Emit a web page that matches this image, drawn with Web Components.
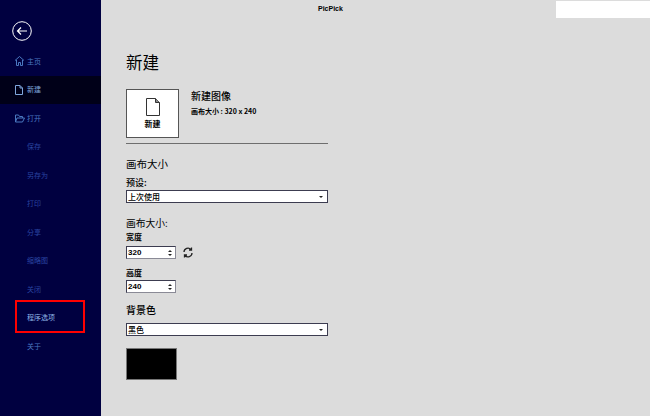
<!DOCTYPE html>
<html lang="zh">
<head>
<meta charset="utf-8">
<title>PicPick</title>
<style>
  html, body { margin: 0; height: 100%; }
  body { font-family: "Liberation Sans", "Noto Sans CJK SC", sans-serif; }
</style>
</head>
<body>
<app-shell>
  <nav-rail slot="nav">
    <nav-item>
      <svg slot="icon" width="9" height="10" viewBox="0 0 9 10" fill="none" stroke="#4a78c0"><path d="M0 4.500 4.500.5 9 4.500M1.500 4v5.500h2V6.500h2v3h2V4"/></svg>
      主页
    </nav-item>
    <nav-item active>
      <svg slot="icon" width="8" height="10" viewBox="0 0 8 10" fill="none" stroke="#7fa6dc"><path d="M.5.500h4.500l2.500 2.500v6.500h-7zM5 .5V3h2.500"/></svg>
      新建
    </nav-item>
    <nav-item>
      <svg slot="icon" width="10" height="9" viewBox="0 0 10 9" fill="none" stroke="#4a78c0"><path d="M.5 8V1h3l1 1.500h3V4M.5 8l1.500-4h7.500l-2 4z"/></svg>
      打开
    </nav-item>
    <nav-item dim>保存</nav-item>
    <nav-item dim>另存为</nav-item>
    <nav-item dim>打印</nav-item>
    <nav-item dim>分享</nav-item>
    <nav-item dim>缩略图</nav-item>
    <nav-item dim>关闭</nav-item>
    <nav-item strong>程序选项</nav-item>
    <nav-item>关于</nav-item>
  </nav-rail>
  <new-panel></new-panel>
</app-shell>

<script>
class AppShell extends HTMLElement {
  constructor() {
    super();
    this.attachShadow({mode: 'open'}).innerHTML = `
      <style>
        :host { display: grid; grid-template-columns: 101px 1fr; width: 650px; height: 416px; overflow: hidden; background: #dcdcdc; }
        header { display: flex; justify-content: space-between; align-items: flex-start; height: 19px; padding: 1px 0 0 217px; box-sizing: border-box; }
        header span { font: bold 7px/16px "Liberation Sans", sans-serif; color: #000; }
        header i { display: block; width: 94px; height: 17px; background: #fff; }
      </style>
      <slot name="nav"></slot>
      <div>
        <header><span>PicPick</span><i></i></header>
        <slot></slot>
      </div>
    `;
  }
}

class NavRail extends HTMLElement {
  constructor() {
    super();
    this.attachShadow({mode: 'open'}).innerHTML = `
      <style>
        :host { display: flex; flex-direction: column; position: relative; background: #000040; height: 416px; box-sizing: border-box; padding: 19px 0 0; }
        .back { width: 20px; height: 20px; margin: 2px 0 6px 12px; display: block; flex: none; }
        .mark { position: absolute; left: 15px; top: 300px; width: 70px; height: 33px; box-sizing: border-box; border: 2px solid #f00; }
      </style>
      <svg class="back" viewBox="0 0 20 20" fill="none" stroke="#fff" stroke-width="1"><circle cx="10" cy="10" r="9.300"/><path stroke-width="1.200" d="M15 10H5.500M9 6.500 5.500 10 9 13.500"/></svg>
      <slot></slot>
      <div class="mark"></div>
    `;
  }
}

class NavItem extends HTMLElement {
  constructor() {
    super();
    this.attachShadow({mode: 'open'}).innerHTML = `
      <style>
        :host { display: flex; align-items: center; flex: none; height: 28.5px; padding-left: 15px; font: 7px/1 "Noto Sans CJK SC", sans-serif; color: #4a78c0; }
        :host([active]) { background: #000018; color: #7fa6dc; }
        :host([dim]) { color: #2a44a0; }
        :host([strong]) { color: #8fb4e6; }
        .icon { display: flex; width: 12px; flex: none; }
      </style>
      <span class="icon"><slot name="icon"></slot></span>
      <span><slot></slot></span>
    `;
  }
}

class SelectBox extends HTMLElement {
  constructor() {
    super();
    this.attachShadow({mode: 'open'}).innerHTML = `
      <style>
        :host { display: flex; align-items: center; justify-content: space-between; width: 202px; height: 13px; box-sizing: border-box; border: 1px solid #3c3c50; background: #fff; padding: 0 4px 0 1px; font: 500 8px/1 "Noto Sans CJK SC", sans-serif; color: #000; }
        i { width: 0; height: 0; border: 2px solid transparent; border-top: 2px solid #222; border-bottom: 0; }
      </style>
      <span><slot></slot></span><i></i>
    `;
  }
}

class SpinBox extends HTMLElement {
  constructor() {
    super();
    this.attachShadow({mode: 'open'}).innerHTML = `
      <style>
        :host { display: flex; align-items: center; justify-content: space-between; width: 50px; height: 13px; box-sizing: border-box; border: 1px solid #3c3c50; border-right-color: #8a8a96; border-bottom-color: #8a8a96; background: #fff; padding: 0 3px 0 1px; font: bold 8px/1 "Liberation Sans", sans-serif; color: #000; }
        .arrows { display: flex; flex-direction: column; gap: 2px; }
        .arrows i { display: block; width: 0; height: 0; border: 2px solid transparent; border-top: 0; border-bottom: 2px solid #222; }
        .arrows i + i { border-bottom: 0; border-top: 2px solid #222; }
      </style>
      <span><slot></slot></span>
      <span class="arrows"><i></i><i></i></span>
    `;
  }
}

class NewPanel extends HTMLElement {
  constructor() {
    super();
    this.attachShadow({mode: 'open'}).innerHTML = `
      <style>
        :host { display: block; padding: 33px 0 0 25px; font-family: "Noto Sans CJK SC", sans-serif; color: #000; }
        h1 { font: 400 16.500px/20px "Noto Sans CJK SC", sans-serif; margin: 0 0 17px; }
        .hero { display: flex; gap: 12px; padding-bottom: 5px; border-bottom: 1px solid #6e6e6e; width: 202px; }
        .tile { width: 53px; height: 49px; box-sizing: border-box; border: 1px solid #555; background: #fff; display: flex; flex-direction: column; align-items: center; justify-content: center; gap: 3px; font: 700 8px/10px "Noto Sans CJK SC", sans-serif; }
        .hero-text b { display: block; font: 500 10px/14px "Noto Sans CJK SC", sans-serif; }
        .hero-text small { display: block; margin-top: 2px; font: 700 7px/12px "Noto Sans CJK SC", sans-serif; }
        h2 { font: 400 10.500px/14px "Noto Sans CJK SC", sans-serif; margin: 0; }
        .label { font: 700 8px/12px "Noto Sans CJK SC", sans-serif; }
        .row { display: flex; align-items: center; gap: 7px; }
      </style>
      <h1>新建</h1>
      <div class="hero">
        <div class="tile">
          <svg width="14" height="18" viewBox="0 0 14 18" fill="none" stroke="#333"><path d="M.5.500h9l4 4v13H.5z"/><path fill="#888" d="M9.500.5v4h4"/></svg>
          <span>新建</span>
        </div>
        <div class="hero-text">
          <b>新建图像</b>
          <small>画布大小 : 320 x 240</small>
        </div>
      </div>
      <h2 style="margin-top:13px">画布大小</h2>
      <div class="label" style="margin-top:6px;font-size:9px;font-weight:500">预设:</div>
      <select-box style="margin-top:1px">上次使用</select-box>
      <h2 style="margin-top:13px;font-size:9.750px">画布大小:</h2>
      <div class="label" style="margin-top:1px">宽度</div>
      <div class="row" style="margin-top:3px">
        <spin-box>320</spin-box>
        <svg width="10" height="11" viewBox="0 0 10 11" fill="none" stroke="#222" stroke-width="1.300"><path d="M1 5a4 4 0 0 1 7-2.500M9 6A4 4 0 0 1 2 8.500M8.500.5v2.500H6M1.500 10.500V8H4"/></svg>
      </div>
      <div class="label" style="margin-top:8px">高度</div>
      <spin-box style="margin-top:1px">240</spin-box>
      <h2 style="margin-top:10px;font-size:10px;font-weight:500">背景色</h2>
      <select-box style="margin-top:6px">黑色</select-box>
      <div style="width:51px;height:32px;box-sizing:border-box;margin-top:12px;background:#000;border:1px solid #777"></div>
    `;
  }
}

customElements.define('app-shell', AppShell);
customElements.define('nav-rail', NavRail);
customElements.define('nav-item', NavItem);
customElements.define('select-box', SelectBox);
customElements.define('spin-box', SpinBox);
customElements.define('new-panel', NewPanel);
</script>
</body>
</html>
